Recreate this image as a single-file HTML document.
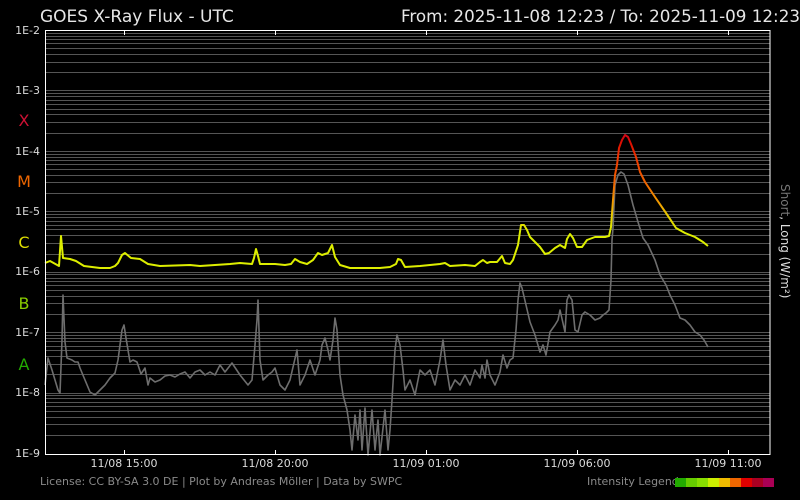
<!DOCTYPE html>
<html><head><meta charset="utf-8"><style>
html,body{margin:0;padding:0;background:#000;width:800px;height:500px;overflow:hidden}
svg{display:block}
text{font-family:"DejaVu Sans","Liberation Sans",sans-serif}
</style></head><body>
<svg width="800" height="500" viewBox="0 0 800 500" xmlns="http://www.w3.org/2000/svg">
<defs>
<linearGradient id="sg" gradientUnits="userSpaceOnUse" x1="0" y1="130" x2="0" y2="250">
<stop offset="0" stop-color="#cc0022"/>
<stop offset="0.12" stop-color="#dd1100"/>
<stop offset="0.22" stop-color="#ee3300"/>
<stop offset="0.45" stop-color="#ee6600"/>
<stop offset="0.62" stop-color="#f0a000"/>
<stop offset="0.72" stop-color="#e8d000"/>
<stop offset="0.85" stop-color="#ddee00"/>
<stop offset="1" stop-color="#ddee00"/>
</linearGradient>
</defs>
<path fill="none" stroke="#555" stroke-width="1" d="
M45 33.5H770M45 36.5H770M45 39.5H770M45 43.5H770M45 48.5H770M45 54.5H770M45 62.5H770M45 72.5H770M45 90.5H770
M45 93.5H770M45 96.5H770M45 100.5H770M45 104.5H770M45 109.5H770M45 114.5H770M45 122.5H770M45 133.5H770M45 151.5H770
M45 154.5H770M45 157.5H770M45 160.5H770M45 164.5H770M45 169.5H770M45 175.5H770M45 182.5H770M45 193.5H770M45 211.5H770
M45 214.5H770M45 217.5H770M45 221.5H770M45 225.5H770M45 229.5H770M45 235.5H770M45 243.5H770M45 254.5H770M45 272.5H770
M45 274.5H770M45 278.5H770M45 281.5H770M45 285.5H770M45 290.5H770M45 296.5H770M45 303.5H770M45 314.5H770M45 332.5H770
M45 335.5H770M45 338.5H770M45 341.5H770M45 346.5H770M45 350.5H770M45 356.5H770M45 364.5H770M45 374.5H770M45 393.5H770
M45 395.5H770M45 398.5H770M45 402.5H770M45 406.5H770M45 411.5H770M45 417.5H770M45 424.5H770M45 435.5H770"/>
<text x="40" y="22" fill="#e6e6e6" font-size="17">GOES X-Ray Flux - UTC</text>
<text x="800" y="22" fill="#e6e6e6" font-size="17" text-anchor="end" textLength="399" lengthAdjust="spacingAndGlyphs">From: 2025-11-08 12:23  /  To: 2025-11-09 12:23</text>
<g fill="#dcdcdc" font-size="11" text-anchor="end">
<text x="40" y="34">1E-2</text><text x="40" y="94">1E-3</text><text x="40" y="155">1E-4</text>
<text x="40" y="215">1E-5</text><text x="40" y="275">1E-6</text><text x="40" y="336">1E-7</text>
<text x="40" y="396">1E-8</text><text x="40" y="457">1E-9</text>
</g>
<g font-size="16" text-anchor="middle">
<text x="24" y="126" fill="#cc1133">X</text>
<text x="24" y="187" fill="#ee6600">M</text>
<text x="24" y="248" fill="#dddd00">C</text>
<text x="24" y="309" fill="#88cc00">B</text>
<text x="24" y="370" fill="#22aa00">A</text>
</g>
<polyline fill="none" stroke="#6e6e6e" stroke-width="1.6" stroke-linejoin="round" points="45,385 48,358 52,370 58,390 60,393 62,340 63,295 65,342 67,358 72,360 75,362 78,362 80,368 85,380 90,392 95,395 100,390 105,385 110,378 115,373 118,360 120,345 122,330 124,325 126,338 130,362 133,360 137,362 141,374 145,368 148,385 150,378 155,382 160,380 165,376 170,375 175,377 180,374 185,372 190,378 195,372 200,370 205,375 210,372 215,375 220,365 225,372 232,363 240,375 248,385 252,380 255,345 257,320 258,300 260,360 263,380 268,375 272,372 275,368 280,385 285,390 290,380 297,350 300,385 305,375 310,360 315,375 320,360 322,345 325,338 328,350 330,360 333,340 335,318 337,330 340,375 343,395 347,410 350,430 352,450 355,415 358,440 360,410 362,450 365,408 368,455 372,410 375,450 378,420 380,455 385,410 388,450 390,430 392,400 395,350 397,335 400,345 403,370 405,390 410,380 415,395 420,370 425,375 430,370 435,385 440,360 443,340 446,365 450,390 455,380 460,385 465,375 470,385 475,370 480,378 482,365 485,378 487,360 490,375 495,385 500,372 503,355 507,368 510,360 513,358 516,330 518,300 520,283 522,288 526,305 530,322 535,335 540,352 543,345 546,355 550,332 555,325 558,320 560,310 565,332 567,300 569,295 572,300 575,330 578,332 582,315 585,312 590,315 595,320 600,318 603,315 606,313 609,310 611,280 612,240 613,228 615,185 618,175 621,172 624,174 628,185 633,205 638,222 643,238 648,245 655,260 660,275 666,285 670,295 675,305 680,318 685,320 690,325 695,332 700,335 704,340 708,347"/>
<polyline fill="none" stroke="url(#sg)" stroke-width="2" stroke-linejoin="round" points="45,263 50,261 59,266 61,236 63,258 70,259 76,261 84,266 100,268 110,268 115,266 118,263 122,255 125,253 131,258 140,259 148,264 160,266 190,265 200,266 230,264 240,263 252,264 254,258 256,249 258,256 260,264 275,264 285,265 291,264 295,259 300,262 307,264 313,260 318,253 322,255 328,253 332,245 335,257 340,265 350,268 380,268 390,267 396,264 398,259 401,260 405,267 420,266 440,264 445,263 450,266 465,265 475,266 480,262 483,260 487,263 490,262 497,262 502,256 505,263 510,264 513,260 518,245 521,225 524,225 527,230 530,237 535,242 540,247 545,254 549,253 555,248 560,245 565,248 567,239 570,234 573,238 577,247 582,247 587,240 595,237 605,237 609,236 611,227 613,200 615,175 617,165 619,148 622,140 625,135 628,137 631,144 636,157 640,172 645,182 655,197 666,213 676,228 685,233 695,237 703,242 708,246"/>
<rect x="45.5" y="30.5" width="724.5" height="424" fill="none" stroke="#fff" stroke-width="1"/>
<g stroke="#fff" stroke-width="1">
<line x1="124.5" x2="124.5" y1="30" y2="35"/><line x1="275.5" x2="275.5" y1="30" y2="35"/><line x1="426.5" x2="426.5" y1="30" y2="35"/><line x1="577.5" x2="577.5" y1="30" y2="35"/><line x1="728.5" x2="728.5" y1="30" y2="35"/>
<line x1="124.5" x2="124.5" y1="450" y2="455"/><line x1="275.5" x2="275.5" y1="450" y2="455"/><line x1="426.5" x2="426.5" y1="450" y2="455"/><line x1="577.5" x2="577.5" y1="450" y2="455"/><line x1="728.5" x2="728.5" y1="450" y2="455"/>
</g>
<g fill="#dcdcdc" font-size="11" text-anchor="middle">
<text x="124" y="467">11/08 15:00</text><text x="275" y="467">11/08 20:00</text><text x="426" y="467">11/09 01:00</text><text x="577" y="467">11/09 06:00</text><text x="728" y="467">11/09 11:00</text>
</g>
<text x="40" y="485" fill="#8a8a8a" font-size="11">License: CC BY-SA 3.0 DE | Plot by Andreas Möller | Data by SWPC</text>
<text x="587" y="485" fill="#8a8a8a" font-size="11">Intensity Legend</text>
<g>
<rect x="675" y="478" width="11" height="9" fill="#22aa00"/><rect x="686" y="478" width="11" height="9" fill="#66cc00"/><rect x="697" y="478" width="11" height="9" fill="#88dd00"/><rect x="708" y="478" width="11" height="9" fill="#ccee00"/><rect x="719" y="478" width="11" height="9" fill="#f0bb00"/><rect x="730" y="478" width="11" height="9" fill="#ee6600"/><rect x="741" y="478" width="11" height="9" fill="#e00000"/><rect x="752" y="478" width="11" height="9" fill="#aa0022"/><rect x="763" y="478" width="11" height="9" fill="#aa0055"/>
</g>
<text transform="translate(781,184) rotate(90)" font-size="12"><tspan fill="#777">Short</tspan><tspan fill="#ddd">, Long (W/m²)</tspan></text>
</svg>
</body></html>
